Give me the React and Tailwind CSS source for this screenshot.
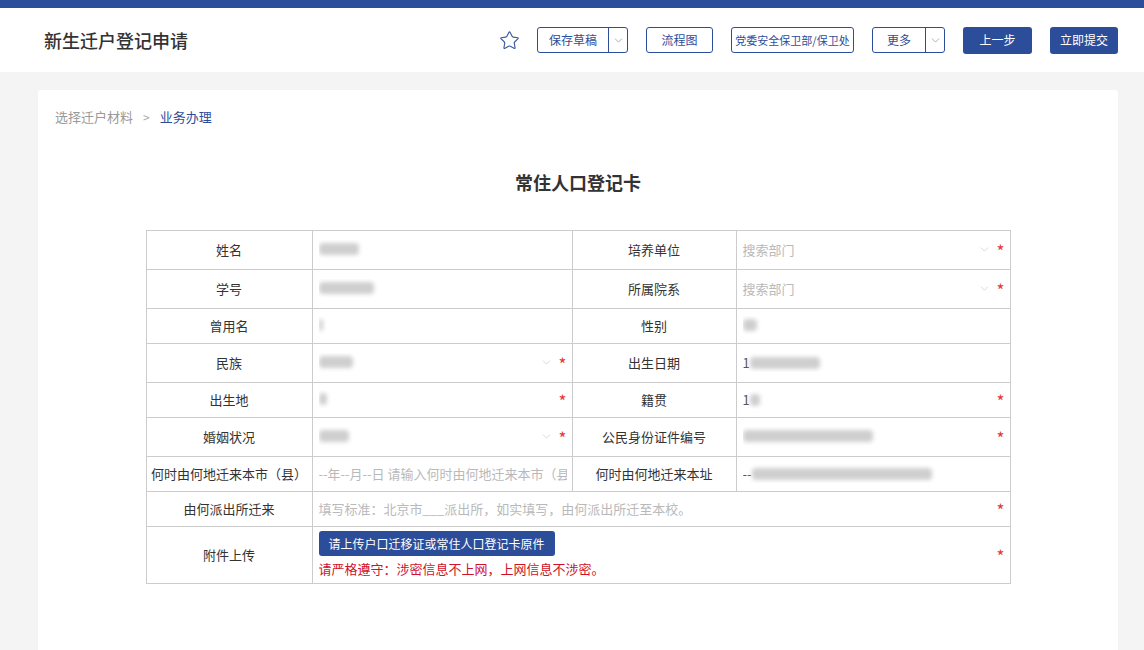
import { Star, ChevronDown } from "lucide-react";

const Blur = ({ w, lead }) => (
  <span className="inline-flex items-center">
    {lead && <span className="text-[#555]">{lead}</span>}
    <span className="inline-block h-[12px] bg-[#cfcfcf] blur-[2px] rounded-sm" style={{ width: w }} />
  </span>
);

const Label = ({ children }) => (
  <td className="border border-[#cccccc] text-center text-[13px] text-[#333] px-1">{children}</td>
);

const Value = ({ children, select, required, colSpan }) => (
  <td colSpan={colSpan} className="border border-[#cccccc] p-0">
    <div className="flex items-center pl-[6px] pr-[5px] text-[13px]">
      <div className="flex-1 min-w-0 overflow-hidden whitespace-nowrap">{children}</div>
      {select && <ChevronDown size={13} strokeWidth={1.2} className="text-[#c4c4c4] mr-[6px]" />}
      {required && <span className="text-[#e4393c] text-[17px] leading-none mt-[2px]">*</span>}
    </div>
  </td>
);

const Ph = ({ children }) => <span className="text-[#b9b9b9]">{children}</span>;

const OutlineBtn = ({ children, w }) => (
  <button className={`h-[26px] ${w} border border-[#2c4d9a] rounded-[3px] text-[12px] text-[#2c4d9a] bg-white whitespace-nowrap`}>
    {children}
  </button>
);

const SplitBtn = ({ children, w }) => (
  <div className="h-[26px] flex border border-[#2c4d9a] rounded-[3px] text-[12px] text-[#2c4d9a] bg-white">
    <span className={`${w} flex items-center justify-center border-r border-[#2c4d9a]`}>{children}</span>
    <span className="w-[18px] flex items-center justify-center">
      <ChevronDown size={13} strokeWidth={1.2} className="text-[#7a86a8]" />
    </span>
  </div>
);

const App = () => {
  return (
    <div className="min-h-screen bg-[#f4f4f4] font-['Noto_Sans_CJK_SC','Microsoft_YaHei',sans-serif]">
      <div className="h-[8px] bg-[#2c4d9a]" />

      {/* Header */}
      <header className="h-[64px] bg-white flex items-center pl-[44px] pr-[26px]">
        <h1 className="text-[18px] font-medium text-[#333]">新生迁户登记申请</h1>
        <div className="ml-auto flex items-center gap-[18px]">
          <Star size={21} strokeWidth={1.3} className="text-[#3d5a9e] mr-[-1px]" />
          <SplitBtn w="w-[71px]">保存草稿</SplitBtn>
          <OutlineBtn w="w-[67px]">流程图</OutlineBtn>
          <button className="h-[26px] w-[123px] border border-[#2c4d9a] rounded-[3px] text-[11px] text-[#2c4d9a] bg-white whitespace-nowrap">
            党委安全保卫部/保卫处
          </button>
          <SplitBtn w="w-[53px]">更多</SplitBtn>
          <button className="h-[27px] w-[69px] rounded-[3px] bg-[#2c4d9a] text-white text-[12px]">上一步</button>
          <button className="h-[27px] w-[68px] rounded-[3px] bg-[#2c4d9a] text-white text-[12px]">立即提交</button>
        </div>
      </header>

      {/* Card */}
      <div className="ml-[38px] mr-[26px] mt-[18px] bg-white rounded-[3px] min-h-[600px] pt-[17px]">
        <div className="pl-[17px] text-[13px] flex items-center gap-[10px]">
          <span className="text-[#999]">选择迁户材料</span>
          <span className="text-[#aaa] text-[12px]">&gt;</span>
          <span className="text-[#2c4d9a]">业务办理</span>
        </div>

        <h2 className="text-center text-[18px] font-bold text-[#333] mt-[42px] leading-[26px]">常住人口登记卡</h2>

        <table className="mx-auto mt-[35px] border-collapse table-fixed w-[864px]">
          <colgroup>
            <col className="w-[166px]" />
            <col className="w-[260px]" />
            <col className="w-[164px]" />
            <col className="w-[274px]" />
          </colgroup>
          <tbody>
            <tr className="h-[39px]">
              <Label>姓名</Label>
              <Value><Blur w={40} /></Value>
              <Label>培养单位</Label>
              <Value select required><Ph>搜索部门</Ph></Value>
            </tr>
            <tr className="h-[39px]">
              <Label>学号</Label>
              <Value><Blur w={55} /></Value>
              <Label>所属院系</Label>
              <Value select required><Ph>搜索部门</Ph></Value>
            </tr>
            <tr className="h-[35px]">
              <Label>曾用名</Label>
              <Value><Blur w={4} /></Value>
              <Label>性别</Label>
              <Value><Blur w={14} /></Value>
            </tr>
            <tr className="h-[39px]">
              <Label>民族</Label>
              <Value select required><Blur w={34} /></Value>
              <Label>出生日期</Label>
              <Value><Blur w={70} lead="1" /></Value>
            </tr>
            <tr className="h-[35px]">
              <Label>出生地</Label>
              <Value required><Blur w={8} /></Value>
              <Label>籍贯</Label>
              <Value required><Blur w={10} lead="1" /></Value>
            </tr>
            <tr className="h-[39px]">
              <Label>婚姻状况</Label>
              <Value select required><Blur w={30} /></Value>
              <Label>公民身份证件编号</Label>
              <Value required><Blur w={130} /></Value>
            </tr>
            <tr className="h-[35px]">
              <Label>何时由何地迁来本市（县）</Label>
              <Value><Ph>--年--月--日 请输入何时由何地迁来本市（县）</Ph></Value>
              <Label>何时由何地迁来本址</Label>
              <Value><Blur w={180} lead="--" /></Value>
            </tr>
            <tr className="h-[35px]">
              <Label>由何派出所迁来</Label>
              <Value colSpan={3} required><Ph>填写标准：北京市___派出所，如实填写，由何派出所迁至本校。</Ph></Value>
            </tr>
            <tr className="h-[57px]">
              <Label>附件上传</Label>
              <Value colSpan={3} required>
                <div className="flex flex-col items-start">
                  <button className="h-[25px] px-[10px] rounded-[3px] bg-[#2c4d9a] text-white text-[12px]">
                    请上传户口迁移证或常住人口登记卡原件
                  </button>
                  <span className="text-[#d0112b] text-[13px] leading-[18px] mt-[4px]">
                    请严格遵守：涉密信息不上网，上网信息不涉密。
                  </span>
                </div>
              </Value>
            </tr>
          </tbody>
        </table>
      </div>
    </div>
  );
};

export default App;
